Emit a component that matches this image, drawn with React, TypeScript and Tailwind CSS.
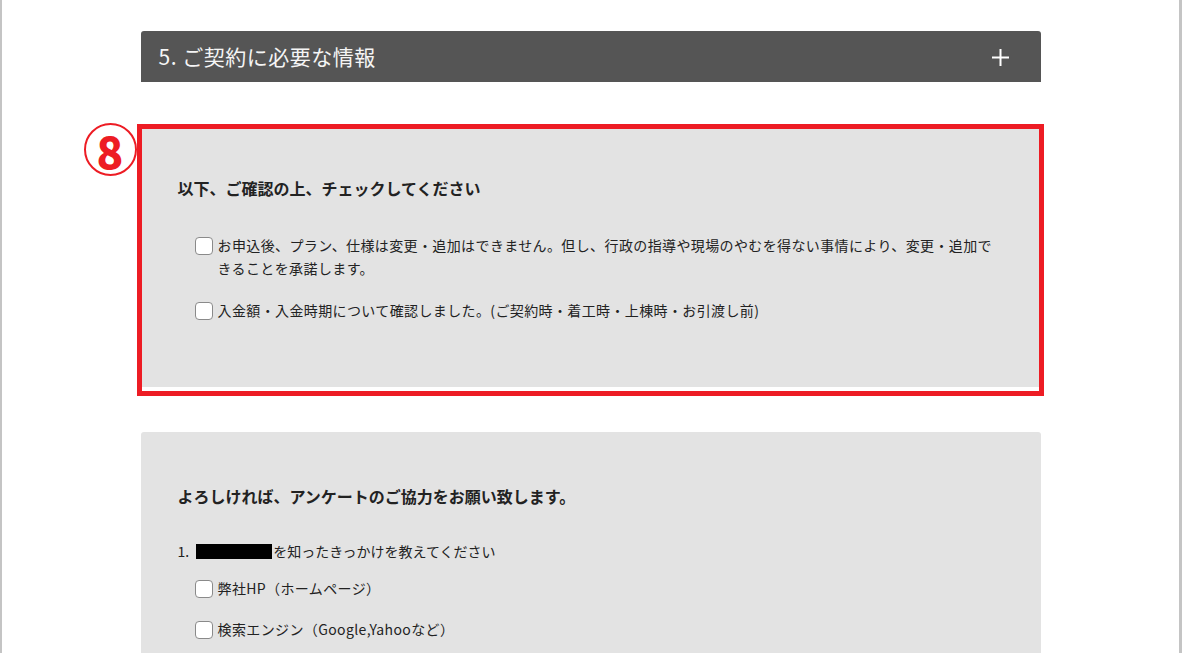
import React from "react";

function Box() {
  return (
    <span className="mt-[3px] inline-block h-[18px] w-[18px] shrink-0 rounded-[4px] border border-[#8a8a8a] bg-white" />
  );
}

function CheckItem({ children, className = "" }: { children: React.ReactNode; className?: string }) {
  return (
    <div className={`flex items-start gap-[5px] pl-[17px] ${className}`}>
      <Box />
      <div className="text-[14px] leading-[23px] tracking-[0.38px] text-[#222]">{children}</div>
    </div>
  );
}

export default function App() {
  return (
    <div className="h-[653px] w-full overflow-hidden border-l-2 border-r-[3px] border-[#c4c4c4] bg-white font-['Noto_Sans_CJK_JP','Noto_Sans',sans-serif]">
      <div className="mx-auto w-[900px] pt-[31px]">
        <div className="flex h-[51px] items-center justify-between rounded-t-[3px] bg-[#555555] pl-[18px] pr-[32px]">
          <span className="text-[21px] leading-none tracking-[0.5px] text-[#f5f5f5]">5. ご契約に必要な情報</span>
          <svg width="17" height="17" viewBox="0 0 17 17" className="mt-[1px]">
            <path d="M8.5 0 V17 M0 8.5 H17" stroke="#fff" strokeWidth="2" />
          </svg>
        </div>

        <div className="relative mt-[42px] ml-[-4px] w-[907px] border-[5px] border-[#ed1c24] bg-white pb-[4px]">
          <div className="absolute left-[-58px] top-[-6px] flex h-[53px] w-[53px] items-center justify-center rounded-full border-2 border-[#ed1c24] bg-white">
            <span className="text-[44px] font-black leading-none text-[#ed1c24]">8</span>
          </div>
          <div className="bg-[#e3e3e3] px-[36px] pb-[65px] pt-[47px]">
            <div className="text-[16px] font-bold leading-[24px] text-[#222]">以下、ご確認の上、チェックしてください</div>
            <CheckItem className="mt-[34px]">
              お申込後、プラン、仕様は変更・追加はできません。但し、行政の指導や現場のやむを得ない事情により、変更・追加できることを承諾します。
            </CheckItem>
            <CheckItem className="mt-[19px]">
              入金額・入金時期について確認しました。(ご契約時・着工時・上棟時・お引渡し前)
            </CheckItem>
          </div>
        </div>

        <div className="mt-[36px] h-[300px] rounded-[3px] bg-[#e3e3e3] px-[37px] pt-[52px]">
          <div className="text-[16px] font-bold leading-[24px] text-[#222]">よろしければ、アンケートのご協力をお願い致します。</div>
          <div className="mt-[32px] flex items-center text-[14px] leading-[23px] text-[#222]">
            <span>1.</span>
            <span className="ml-[7px] inline-block h-[15px] w-[76px] bg-black" />
            <span className="ml-[1px]">を知ったきっかけを教えてください</span>
          </div>
          <CheckItem className="mt-[14px]">弊社HP（ホームページ）</CheckItem>
          <CheckItem className="mt-[18px]">検索エンジン（Google,Yahooなど）</CheckItem>
        </div>
      </div>
    </div>
  );
}
